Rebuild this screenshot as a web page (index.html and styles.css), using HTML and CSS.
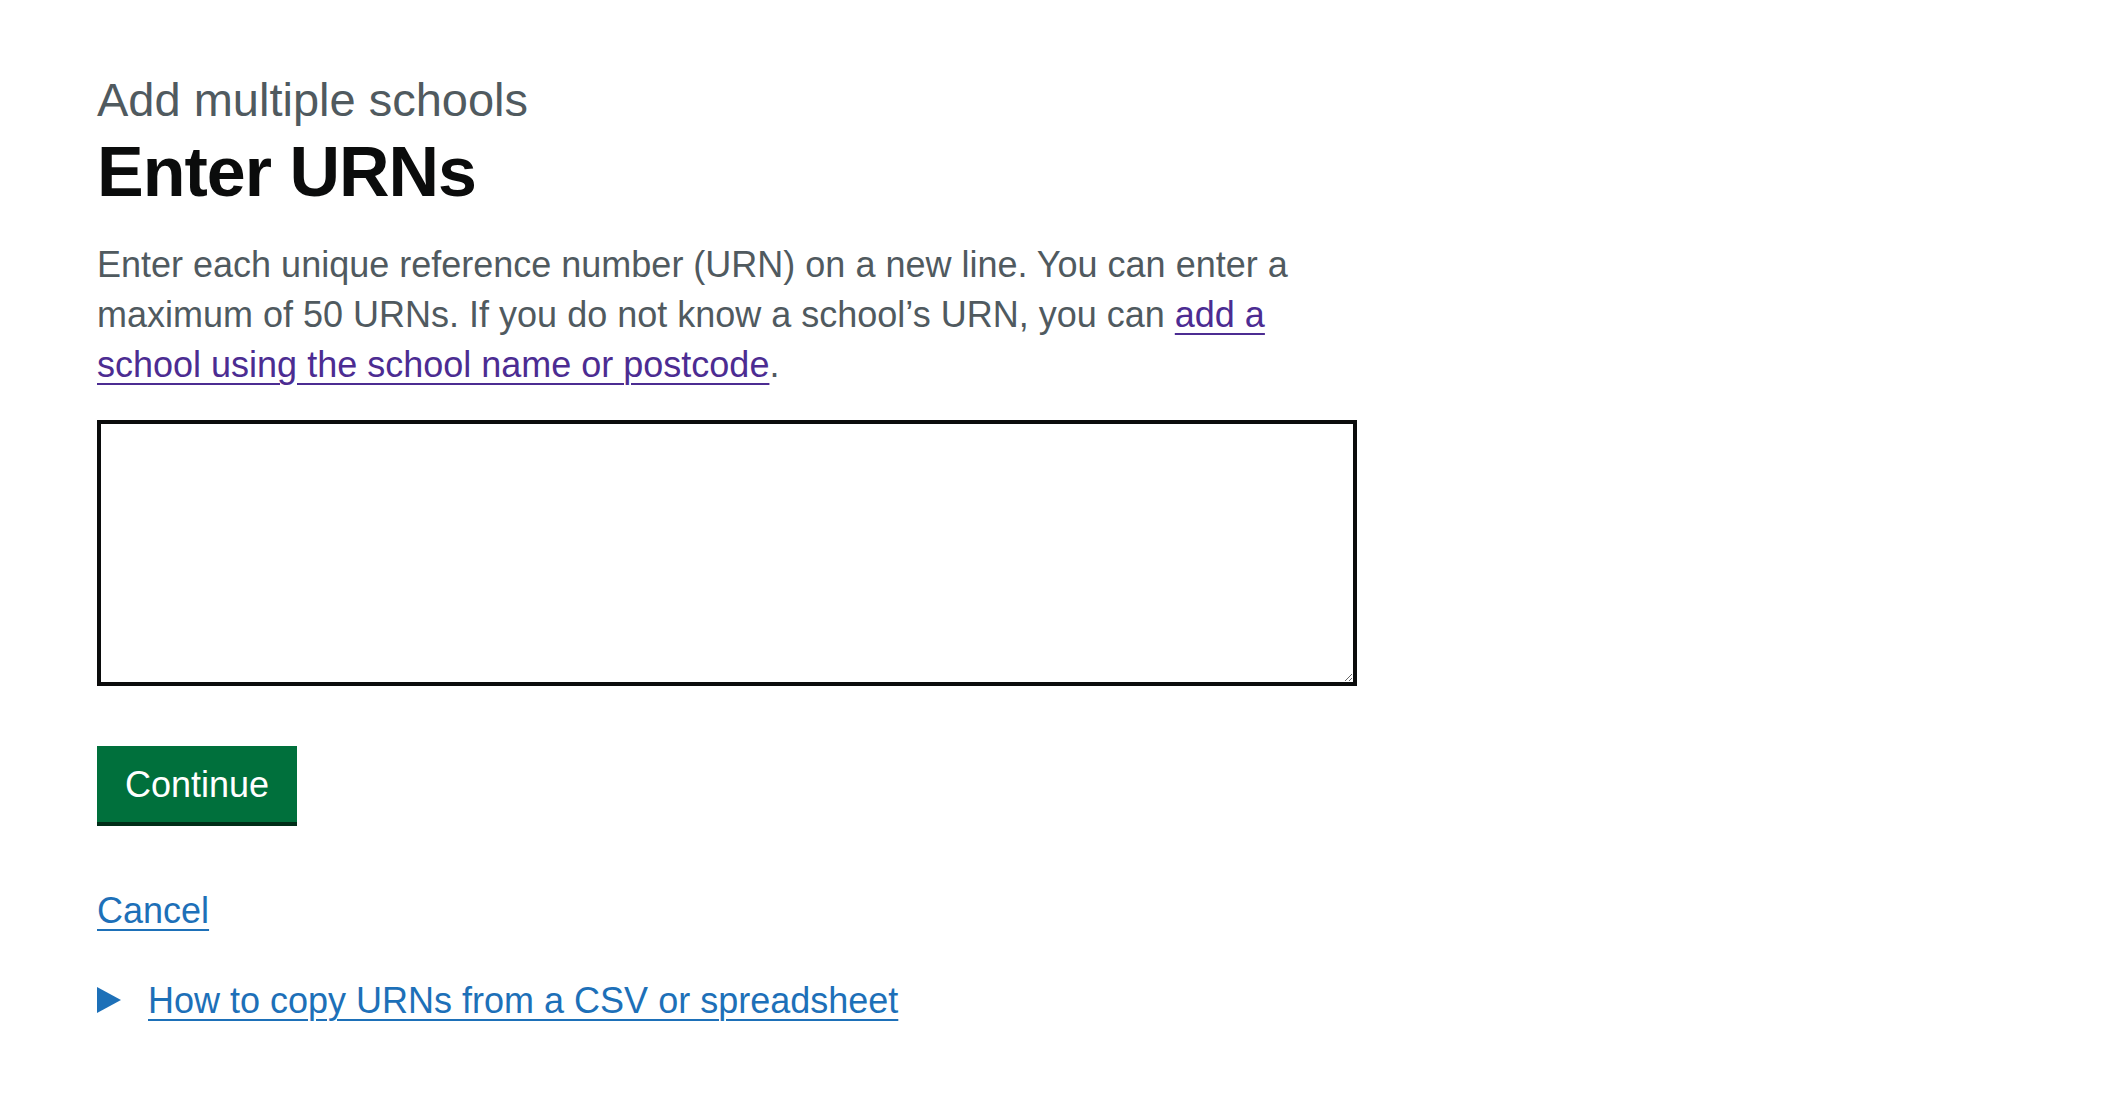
FILE: index.html
```html
<!DOCTYPE html>
<html lang="en">
<head>
<meta charset="utf-8">
<title>Enter URNs</title>
<link rel="stylesheet" href="styles.css">
</head>
<body>
<div class="width-container">
  <main class="main">
    <div class="column">
      <form class="form" action="#" onsubmit="return false;">
        <div class="form-group">
          <h1 class="label-wrapper">
            <span class="caption">Add multiple schools</span>
            <label class="heading" for="urns">Enter URNs</label>
          </h1>
          <div class="hint">Enter each unique reference number (URN) on a new line. You can enter a maximum of 50 URNs. If you do not know a school’s URN, you can <a class="link link-visited" href="#">add a school using the school name or postcode</a>.</div>
          <textarea class="textarea" id="urns" name="urns" rows="5"></textarea>
        </div>
        <button class="button" type="submit">Continue</button>
        <p class="body"><a class="link" href="#">Cancel</a></p>
        <details class="details">
          <summary class="summary"><span class="summary-text">How to copy URNs from a CSV or spreadsheet</span></summary>
        </details>
      </form>
    </div>
  </main>
</div>
</body>
</html>
```

FILE: styles.css
```css
html, body {
  margin: 0;
  padding: 0;
  background: #ffffff;
}

body {
  font-family: "Liberation Sans", Arial, sans-serif;
  color: #0b0c0c;
}

.width-container {
  max-width: 1920px;
  margin: 0 auto;
}

.main {
  padding-top: 70px;
  padding-bottom: 60px;
}

.column {
  width: 1260px;
}

.form {
  margin: 0;
}

.form-group {
  margin-bottom: 60px;
}

.label-wrapper {
  margin: 0;
  padding: 0;
  font-weight: normal;
  font-size: inherit;
}

.caption {
  display: block;
  font-size: 47px;
  line-height: 60px;
  color: #505a5f;
  font-weight: 400;
  margin-bottom: 2px;
}

.heading {
  display: block;
  font-size: 70px;
  line-height: 80px;
  font-weight: 700;
  letter-spacing: -1px;
  color: #0b0c0c;
  margin-bottom: 28px;
}

.hint {
  font-size: 36px;
  line-height: 50px;
  color: #505a5f;
  margin-bottom: 30px;
}

.link {
  color: #1d70b8;
  text-decoration: underline;
  text-decoration-thickness: 2px;
  text-underline-offset: 6px;
}

.link-visited {
  color: #4c2c92;
}

.textarea {
  display: block;
  box-sizing: border-box;
  width: 100%;
  height: 266px;
  margin: 0;
  padding: 10px;
  border: 4px solid #0b0c0c;
  border-radius: 0;
  font-family: "Liberation Sans", Arial, sans-serif;
  font-size: 36px;
  line-height: 47px;
  color: #0b0c0c;
  background: #ffffff;
  resize: vertical;
  outline: none;
}

.button {
  display: block;
  box-sizing: border-box;
  margin: 0 0 64px 0;
  padding: 16px 24px 14px;
  border: 4px solid transparent;
  border-radius: 0;
  background: #00703c;
  box-shadow: 0 4px 0 #002d18;
  color: #ffffff;
  font-family: "Liberation Sans", Arial, sans-serif;
  font-size: 36px;
  line-height: 38px;
  font-weight: 400;
  cursor: pointer;
}

.body {
  margin: 0 0 40px 0;
  font-size: 36px;
  line-height: 50px;
}

.details {
  font-size: 36px;
  line-height: 50px;
  color: #0b0c0c;
}

.summary {
  position: relative;
  display: inline-block;
  padding-left: 51px;
  color: #1d70b8;
  cursor: pointer;
  list-style: none;
}

.summary::-webkit-details-marker {
  display: none;
}

.summary::before {
  content: "";
  position: absolute;
  left: 0;
  top: 11px;
  width: 0;
  height: 0;
  border-style: solid;
  border-color: transparent;
  border-width: 13.5px 0 13.5px 24px;
  border-left-color: #1d70b8;
}

.summary-text {
  text-decoration: underline;
  text-decoration-thickness: 2px;
  text-underline-offset: 6px;
}
```
